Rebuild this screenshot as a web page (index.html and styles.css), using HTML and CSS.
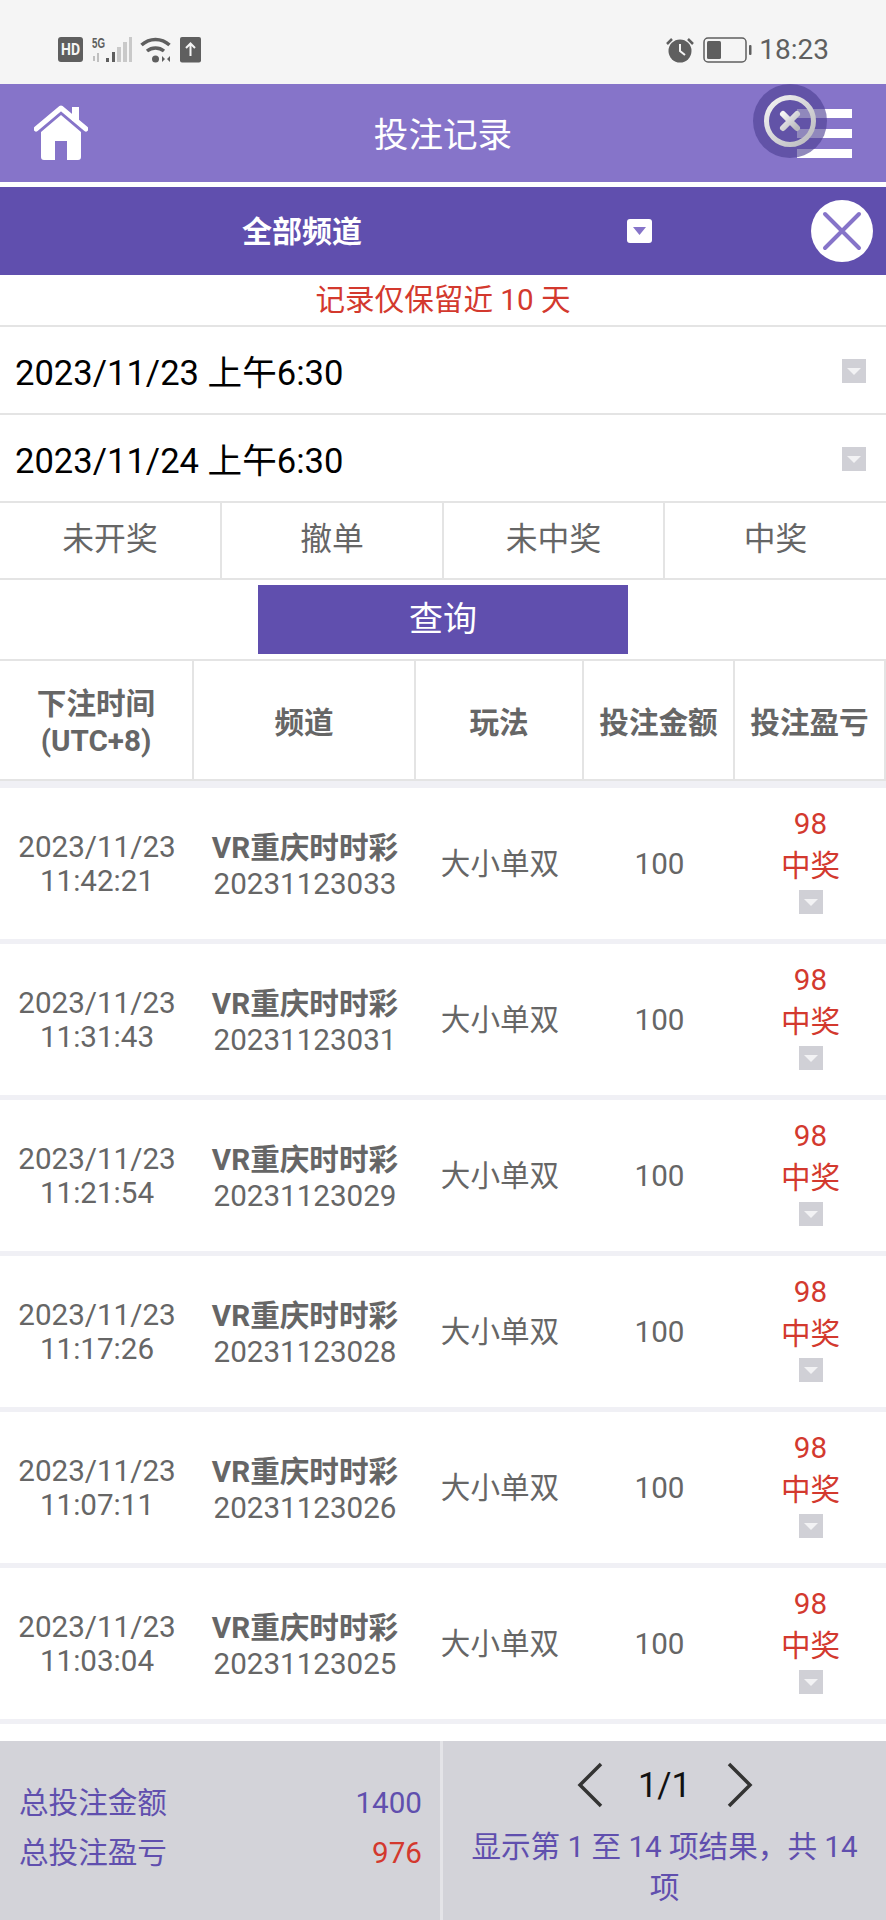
FILE: index.html
```html
<!DOCTYPE html>
<html lang="zh-CN">
<head>
	<meta charset="UTF-8">
	<title>投注记录</title>
	<link rel="stylesheet" href="styles.css">
</head>
<body>
	<div class="status">
		<div class="status-left">
			<svg width="26" height="34" viewBox="0 -4 26 34"><rect x="0" y="0" width="25" height="25" rx="3" fill="#5f5f5f"/><text x="12.5" y="18" class="hd" textLength="19" lengthAdjust="spacingAndGlyphs">HD</text></svg>
			<svg width="40" height="34" viewBox="0 -4 40 34">
				<text x="0" y="11" class="fiveg" textLength="13" lengthAdjust="spacingAndGlyphs">5G</text>
				<path d="M2 24v-5M6 25v-9" stroke="#bbb" stroke-width="1.800" fill="none"/>
				<rect x="14" y="21" width="3" height="4" fill="#5f5f5f"/>
				<rect x="20" y="15" width="3" height="10" fill="#5f5f5f"/>
				<rect x="25" y="10" width="4" height="15" fill="#c9c9c9"/>
				<rect x="31" y="5" width="4" height="20" fill="#c9c9c9"/>
				<rect x="37" y="0" width="3" height="25" fill="#c9c9c9"/>
			</svg>
			<svg width="32" height="26" viewBox="0 0 32 26">
				<g fill="none" stroke="#5f5f5f" stroke-width="3.500">
					<path d="M1.500 8c8-7.500 20-7.500 28 0"/>
					<path d="M7 14c5-4 12-4 17 0"/>
				</g>
				<circle cx="15.500" cy="22" r="3.500" fill="#5f5f5f"/>
				<path d="M25 22l-3-3v6zM27 22l3-3v6z" fill="#5f5f5f"/>
			</svg>
			<svg width="21" height="26" viewBox="0 0 21 26"><rect x="0" y="0" width="21" height="25.500" rx="2" fill="#5f5f5f"/><path d="M10.500 19V7M6 11l4.500-4.500L15 11" stroke="#f5f5f5" stroke-width="2" fill="none"/></svg>
		</div>
		<div class="status-right">
			<svg width="28" height="26" viewBox="0 0 28 26">
				<circle cx="14" cy="14" r="11.500" fill="#5f5f5f"/>
				<path d="M14 7v7l5 4" stroke="#f5f5f5" stroke-width="2" fill="none"/>
				<path d="M1 7l5-5M27 7l-5-5" stroke="#5f5f5f" stroke-width="2.500"/>
			</svg>
			<svg width="50" height="26" viewBox="0 0 50 26">
				<rect x="1" y="1" width="42" height="24" rx="4" fill="none" stroke="#5f5f5f" stroke-width="1.500"/>
				<rect x="4" y="4" width="14" height="18" rx="1.500" fill="#5f5f5f"/>
				<rect x="46" y="8" width="2.500" height="10" rx="1" fill="#5f5f5f"/>
			</svg>
			<span class="clock">18:23</span>
		</div>
	</div>

	<div class="top">
		<svg class="home" width="54" height="55" viewBox="0 0 54 55">
			<path d="M7 27L27 10l20 17v25a3 3 0 0 1-3 3H33V36H21v19H10a3 3 0 0 1-3-3z" fill="#fff"/>
			<path d="M2 24L27 3l25 21" fill="none" stroke="#fff" stroke-width="5" stroke-linecap="round" stroke-linejoin="round"/>
			<path d="M38 2h7v14h-7z" fill="#fff"/>
		</svg>
		<div class="title">投注记录</div>
		<div class="menu"><i></i><i></i><i></i></div>
		<div class="float-btn">
			<svg width="74" height="74" viewBox="0 0 74 74">
				<defs>
					<linearGradient id="ring" x1="0" y1="0" x2="1" y2="1">
						<stop offset="0" stop-color="#f4f4f4"/>
						<stop offset="1" stop-color="#b9b9bd"/>
					</linearGradient>
				</defs>
				<circle cx="37" cy="37" r="37" fill="#4c3f93" fill-opacity=".62"/>
				<circle cx="37" cy="37" r="23.500" fill="none" stroke="url(#ring)" stroke-width="5"/>
				<path d="M30 30l14 14M44 30L30 44" stroke="url(#ring)" stroke-width="6" stroke-linecap="round"/>
			</svg>
		</div>
	</div>

	<div class="bar">
		<div class="bar-label">全部频道</div>
		<svg class="bar-arrow" width="25" height="24" viewBox="0 0 25 24"><rect width="25" height="24" rx="3" fill="#fff"/><path d="M6 8h13l-6.500 8z" fill="#8674c9"/></svg>
		<svg class="bar-close" width="62" height="62" viewBox="0 0 62 62">
			<circle cx="31" cy="31" r="31" fill="#fff"/>
			<path d="M14 14l34 34M48 14L14 48" stroke="#8674c9" stroke-width="4" stroke-linecap="round"/>
		</svg>
	</div>

	<div class="notice">记录仅保留近 10 天</div>

	<div class="date-row">
		<span>2023/11/23 上午6:30</span>
		<svg class="arrow" width="24" height="24" viewBox="0 0 24 24"><rect width="24" height="24" fill="#d0d0d6"/><path d="M5 9h14l-7 7z" fill="#f2f2f4"/></svg>
	</div>
	<div class="date-row">
		<span>2023/11/24 上午6:30</span>
		<svg class="arrow" width="24" height="24" viewBox="0 0 24 24"><rect width="24" height="24" fill="#d0d0d6"/><path d="M5 9h14l-7 7z" fill="#f2f2f4"/></svg>
	</div>

	<div class="filters">
		<div class="filter">未开奖</div>
		<div class="filter">撤单</div>
		<div class="filter">未中奖</div>
		<div class="filter">中奖</div>
	</div>

	<div class="query-wrap"><div class="query">查询</div></div>

	<div class="thead">
		<div class="th">下注时间<br>(UTC+8)</div>
		<div class="th">频道</div>
		<div class="th">玩法</div>
		<div class="th">投注金额</div>
		<div class="th">投注盈亏</div>
	</div>

	<div class="rows">
		<div class="row">
			<div class="cell when">2023/11/23<br>11:42:21</div>
			<div class="cell game"><b>VR重庆时时彩</b><br>20231123033</div>
			<div class="cell">大小单双</div>
			<div class="cell">100</div>
			<div class="cell win">98<br>中奖<svg class="arrow" width="24" height="24" viewBox="0 0 24 24"><rect width="24" height="24" fill="#d0d0d6"/><path d="M5 9h14l-7 7z" fill="#f2f2f4"/></svg></div>
		</div>
		<div class="row">
			<div class="cell when">2023/11/23<br>11:31:43</div>
			<div class="cell game"><b>VR重庆时时彩</b><br>20231123031</div>
			<div class="cell">大小单双</div>
			<div class="cell">100</div>
			<div class="cell win">98<br>中奖<svg class="arrow" width="24" height="24" viewBox="0 0 24 24"><rect width="24" height="24" fill="#d0d0d6"/><path d="M5 9h14l-7 7z" fill="#f2f2f4"/></svg></div>
		</div>
		<div class="row">
			<div class="cell when">2023/11/23<br>11:21:54</div>
			<div class="cell game"><b>VR重庆时时彩</b><br>20231123029</div>
			<div class="cell">大小单双</div>
			<div class="cell">100</div>
			<div class="cell win">98<br>中奖<svg class="arrow" width="24" height="24" viewBox="0 0 24 24"><rect width="24" height="24" fill="#d0d0d6"/><path d="M5 9h14l-7 7z" fill="#f2f2f4"/></svg></div>
		</div>
		<div class="row">
			<div class="cell when">2023/11/23<br>11:17:26</div>
			<div class="cell game"><b>VR重庆时时彩</b><br>20231123028</div>
			<div class="cell">大小单双</div>
			<div class="cell">100</div>
			<div class="cell win">98<br>中奖<svg class="arrow" width="24" height="24" viewBox="0 0 24 24"><rect width="24" height="24" fill="#d0d0d6"/><path d="M5 9h14l-7 7z" fill="#f2f2f4"/></svg></div>
		</div>
		<div class="row">
			<div class="cell when">2023/11/23<br>11:07:11</div>
			<div class="cell game"><b>VR重庆时时彩</b><br>20231123026</div>
			<div class="cell">大小单双</div>
			<div class="cell">100</div>
			<div class="cell win">98<br>中奖<svg class="arrow" width="24" height="24" viewBox="0 0 24 24"><rect width="24" height="24" fill="#d0d0d6"/><path d="M5 9h14l-7 7z" fill="#f2f2f4"/></svg></div>
		</div>
		<div class="row">
			<div class="cell when">2023/11/23<br>11:03:04</div>
			<div class="cell game"><b>VR重庆时时彩</b><br>20231123025</div>
			<div class="cell">大小单双</div>
			<div class="cell">100</div>
			<div class="cell win">98<br>中奖<svg class="arrow" width="24" height="24" viewBox="0 0 24 24"><rect width="24" height="24" fill="#d0d0d6"/><path d="M5 9h14l-7 7z" fill="#f2f2f4"/></svg></div>
		</div>
	</div>

	<div class="foot">
		<div class="totals">
			<div class="total"><span>总投注金额</span><span>1400</span></div>
			<div class="total"><span>总投注盈亏</span><span class="red">976</span></div>
		</div>
		<div class="pager">
			<div class="pages">
				<svg width="26" height="46" viewBox="0 0 26 46"><path d="M24 2L3 23l21 21" fill="none" stroke="#333" stroke-width="3.500"/></svg>
				<span class="page-no">1/1</span>
				<svg width="26" height="46" viewBox="0 0 26 46"><path d="M2 2l21 21L2 44" fill="none" stroke="#333" stroke-width="3.500"/></svg>
			</div>
			<div class="page-info">显示第 1 至 14 项结果，共 14 项</div>
		</div>
	</div>
</body>
</html>
```

FILE: styles.css
```css
*{
	box-sizing: border-box;
}
body{
	margin:0;
	width:886px;
	height:1920px;
	overflow: hidden;
	background:#fff;
	color:#666;
	font:29.600px/35px Roboto,"Noto Sans CJK SC",sans-serif;
}
svg{
	display: block;
}

/* status bar */
.status{
	display: flex;
	justify-content: space-between;
	align-items: flex-start;
	height:84px;
	padding:37px 57px 0 58px;
	background:#f5f5f5;
}
.status-left,.status-right{
	display: flex;
	align-items: center;
	height:26px;
}
.status-left{
	gap:8px;
}
.status-right{
	gap:9px;
}
.hd{
	fill:#f5f5f5;
	font:700 16px Roboto,sans-serif;
	text-anchor: middle;
}
.fiveg{
	fill:#5f5f5f;
	font:700 14px "Liberation Sans",sans-serif;
}
.clock{
	margin-left:-3px;
	color:#5f5f5f;
	font-size:28px;
	line-height:26px;
}

/* header */
.top{
	position: relative;
	display: flex;
	align-items: center;
	justify-content: space-between;
	height:98px;
	padding:0 34px;
	background:#8674c9;
}
.home{
	margin-top:-1px;
}
.title{
	color:#fff;
	font-size:34.600px;
	line-height:40px;
	margin:4px 0 0 1px;
}
.menu{
	display: flex;
	flex-direction: column;
	gap:11px;
	width:55px;
}
.menu i{
	display: block;
	height:9px;
	background:#fff;
}
.float-btn{
	position: absolute;
	left:753px;
	top:0;
}

.bar{
	display: flex;
	align-items: center;
	height:88px;
	margin-top:5px;
	padding:0 13px 0 242px;
	background:#604fae;
}
.bar-label{
	width:385px;
	color:#fff;
	font-weight:700;
	font-size:30px;
}
.bar-close{
	margin-left:159px;
}

.notice{
	height:52px;
	border-bottom:2px solid #e4e4e4;
	color:#d3392e;
	line-height:51px;
	text-align: center;
}

.date-row{
	display: flex;
	align-items: center;
	justify-content: space-between;
	height:88px;
	padding:6px 20px 0 15px;
	border-bottom:2px solid #e4e4e4;
	color:#000;
	font-size:34.600px;
}
.date-row .arrow{
	margin-top:-5px;
}

.filters{
	display: grid;
	grid-template-columns: 222px 222px 221px 221px;
	height:77px;
	border-bottom:2px solid #e4e4e4;
}
.filter{
	display: flex;
	align-items: center;
	justify-content: center;
	border-right:2px solid #e4e4e4;
	font-size:31.800px;
	padding-bottom:2px;
}
.filter:last-child{
	border-right:0;
}

.query-wrap{
	display: flex;
	justify-content: center;
	padding:5px 0;
}
.query{
	width:370px;
	height:69px;
	background:#604fae;
	color:#fff;
	font-size:34px;
	line-height:68px;
	text-align: center;
}

.thead{
	display: grid;
	grid-template-columns: 194px 222px 168px 151px 151px;
	height:122px;
	border-top:2px solid #e4e4e4;
	border-bottom:2px solid #e4e4e4;
}
.th{
	display: flex;
	align-items: center;
	justify-content: center;
	padding-top:6px;
	text-align: center;
	border-right:2px solid #e4e4e4;
	font-weight:700;
	line-height:37px;
}

.rows{
	border-top:7px solid #f0f0f5;
}
.row{
	display: grid;
	grid-template-columns: 194px 222px 168px 151px 151px;
	align-items: center;
	height:156px;
	padding-top:1px;
	border-bottom:5px solid #f0f0f5;
	text-align: center;
}
.when{
	line-height:34.500px;
}
.game{
	padding-top:4px;
	line-height:36px;
}
.win{
	color:#d3392e;
	line-height:42px;
	padding-bottom:11px;
}
.win .arrow{
	margin:3px auto 0;
}

.foot{
	display: grid;
	grid-template-columns: 440px 443px;
	gap:3px;
	height:179px;
	margin-top:17px;
	background:#e4e4e8;
}
.totals,.pager{
	background:#d3d3d9;
	color:#604fae;
}
.totals{
	padding:37px 18px 0 19px;
}
.total{
	display: flex;
	justify-content: space-between;
	line-height:50px;
}
.red{
	color:#d3392e;
}
.pager{
	text-align: center;
}
.pages{
	display: flex;
	align-items: center;
	justify-content: center;
	padding:21px 0 0 0;
}
.page-no{
	width:124px;
	color:#111;
	font-size:34.500px;
}
.page-info{
	padding:19px 18px 0;
	line-height:41px;
}
```
